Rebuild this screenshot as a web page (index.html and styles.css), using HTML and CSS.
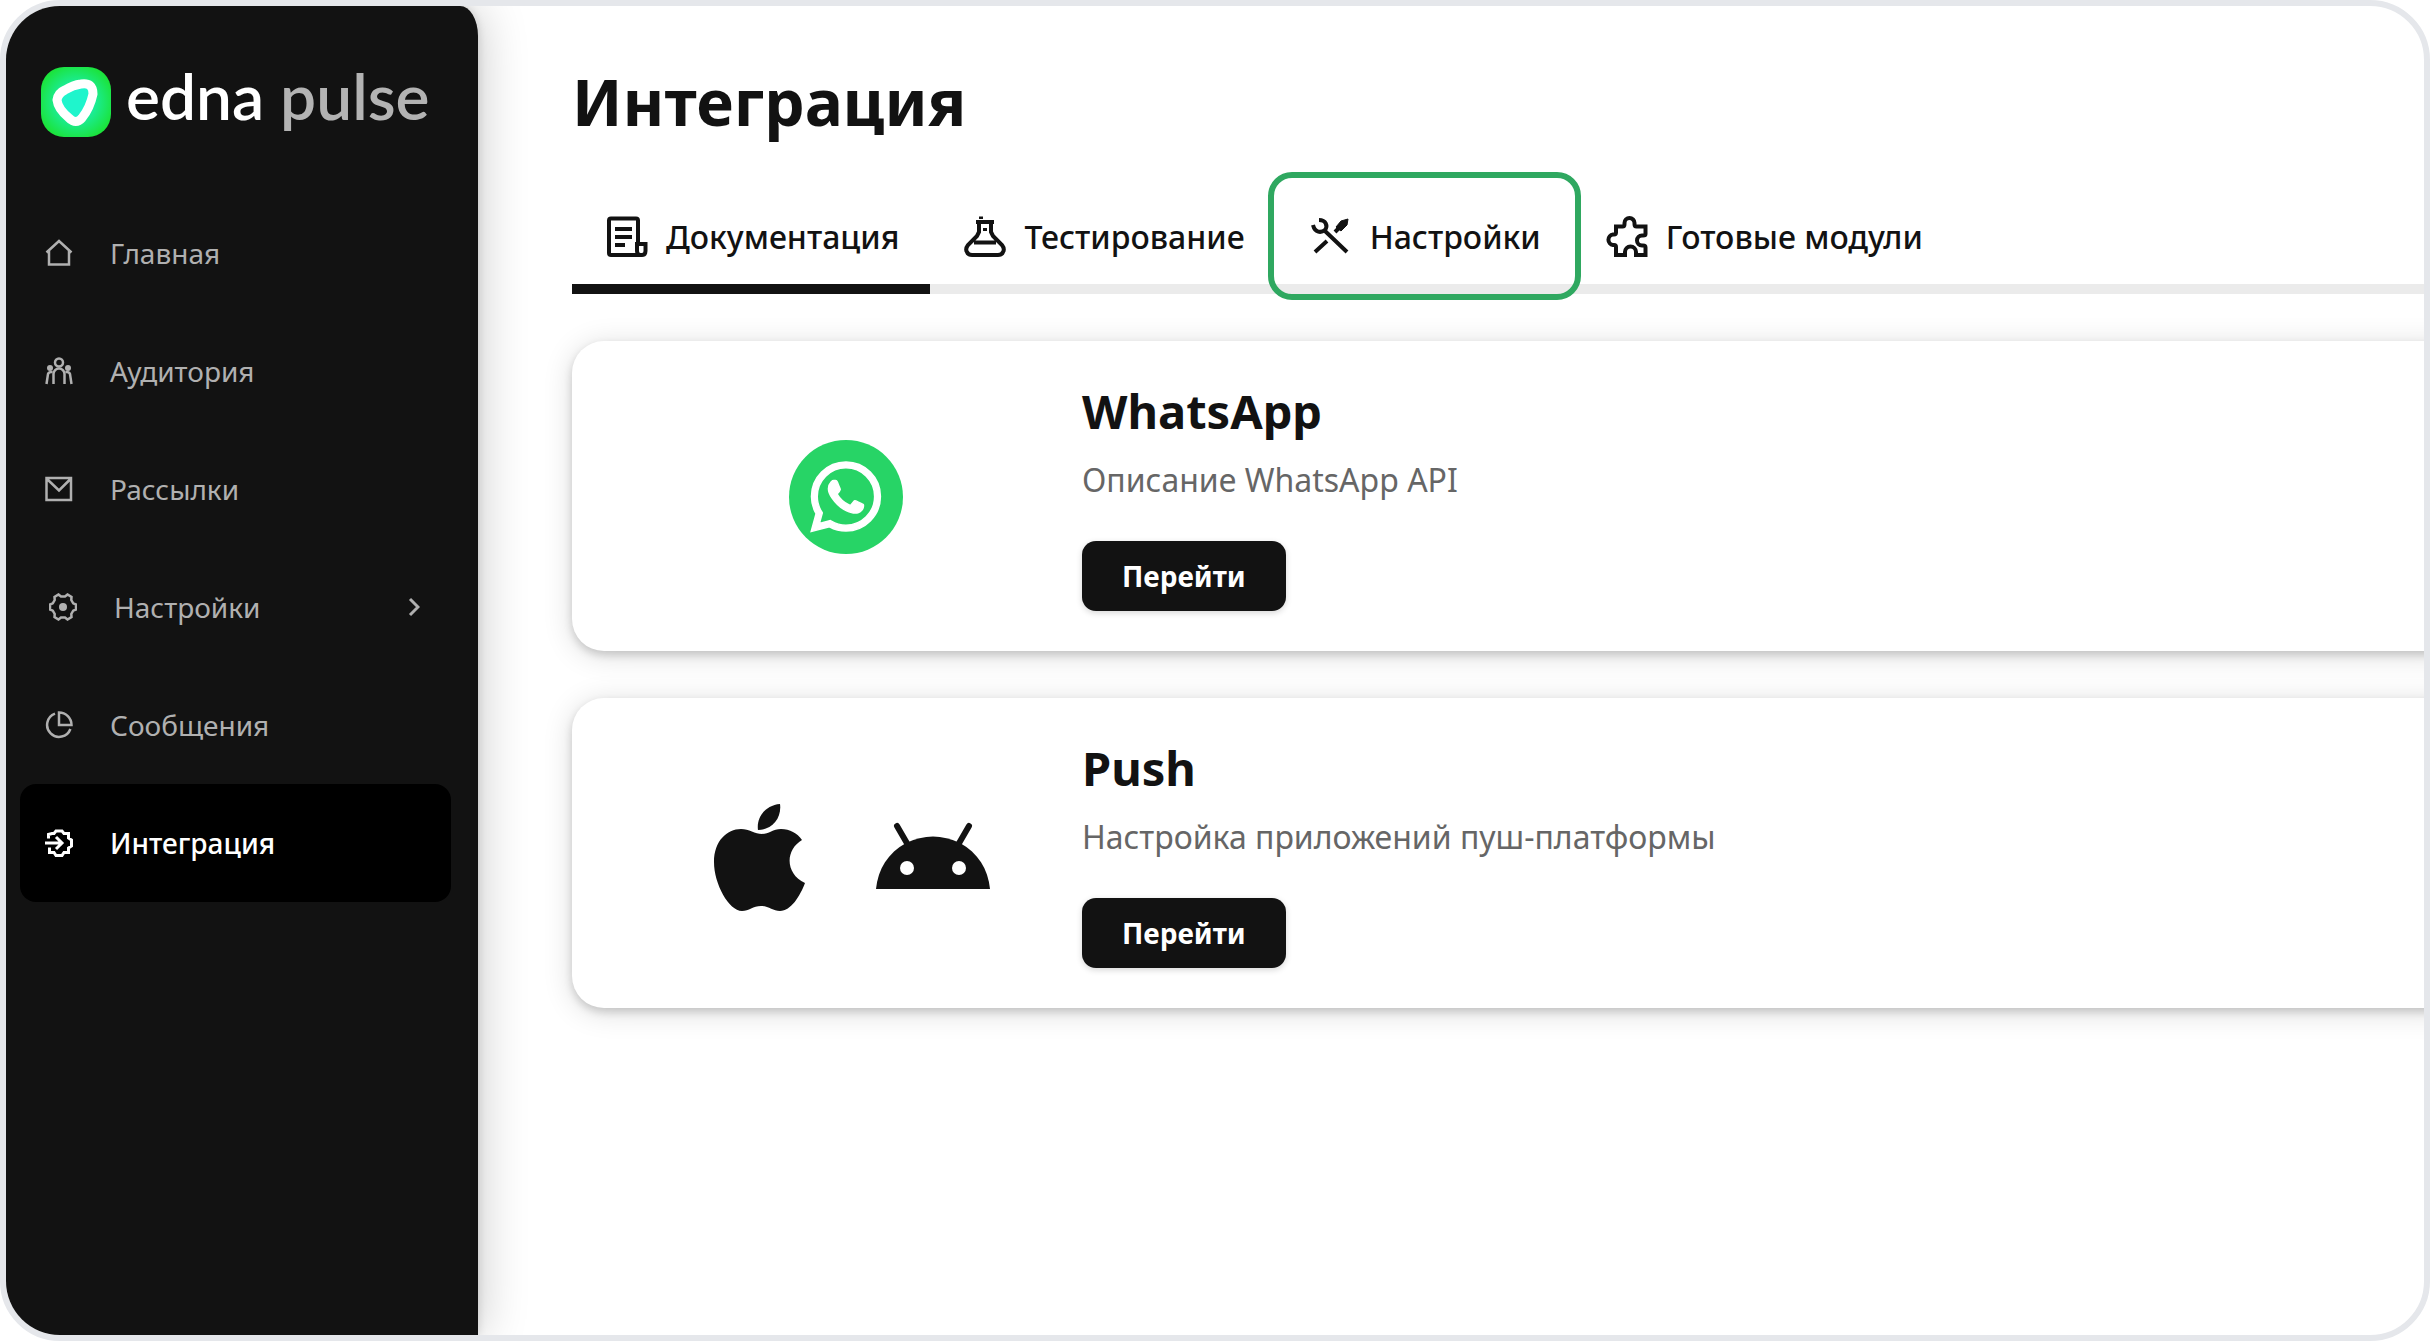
FILE: index.html
```html
<!DOCTYPE html>
<html lang="ru">
<head>
<meta charset="utf-8">
<meta name="viewport" content="width=device-width, initial-scale=1">
<title>edna pulse — Интеграция</title>
<link rel="stylesheet" href="styles.css">
</head>
<body>
<div class="app">
  <aside class="sidebar">
    <a class="logo" href="#">
      <svg class="logo-mark" viewBox="0 0 70 70" aria-hidden="true">
        <defs>
          <radialGradient id="glow" cx="50%" cy="50%" r="62%">
            <stop offset="0" stop-color="#1cf2d0"/>
            <stop offset="0.45" stop-color="#1bec94"/>
            <stop offset="0.9" stop-color="#1be33a"/>
          </radialGradient>
        </defs>
        <rect width="70" height="70" rx="23" fill="url(#glow)"/>
        <path d="M40 17Q52 15 52 27Q49 41 41 51Q35 58 28 51Q17 42 16 33Q17 26 24 23Q32 18 40 17Z" fill="#1ff5cc" stroke="#fff" stroke-width="9" stroke-linejoin="round"/>
      </svg>
      <span class="logo-text">edna <span class="logo-product">pulse</span></span>
    </a>
    <nav class="menu" aria-label="Главное меню">
      <a class="menu-item" href="#">
        <svg class="menu-icon" viewBox="0 0 28 28" aria-hidden="true"><path d="M1.500 13.500L14 2L26.500 13.500M4 11.500V25.500H24V11.500"/></svg>
        <span>Главная</span>
      </a>
      <a class="menu-item" href="#">
        <svg class="menu-icon" viewBox="0 0 28 28" aria-hidden="true"><circle cx="14" cy="5.500" r="4"/><path d="M8.500 27V17a5.500 5.500 0 0 1 11 0V27M1.500 27L3 17Q4 14.500 7.500 15M26.500 27L25 17Q24 14.500 20.500 15"/><circle class="solid" cx="5" cy="11" r="3"/><circle class="solid" cx="23" cy="11" r="3"/></svg>
        <span>Аудитория</span>
      </a>
      <a class="menu-item" href="#">
        <svg class="menu-icon" viewBox="0 0 28 28" aria-hidden="true"><path d="M1.500 3H26V25H1.500ZM2 4L14 15.500L25.500 4"/></svg>
        <span>Рассылки</span>
      </a>
      <a class="menu-item menu-item-nested" href="#">
        <svg class="menu-icon" viewBox="0 0 28 28" aria-hidden="true"><path d="M9.500 1.500L12 3.500H16L18.500 1.500L22.500 4L22.300 7L24.200 10.300L27 11.500V16.500L24.200 17.700L22.300 21L22.500 24L18.500 26.500L16 24.500H12L9.500 26.500L5.500 24L5.700 21L3.800 17.700L1 16.500V11.500L3.800 10.300L5.700 7L5.500 4Z"/><circle class="solid" cx="14" cy="14" r="4"/></svg>
        <span>Настройки</span>
        <svg class="menu-arrow" viewBox="0 0 12 20" aria-hidden="true"><path d="M2 2L10 10L2 18"/></svg>
      </a>
      <a class="menu-item" href="#">
        <svg class="menu-icon" viewBox="0 0 28 28" aria-hidden="true"><path d="M10 2.600A12 12 0 1 0 25.400 18M14 1.500V14H26.500A12.500 12.500 0 0 0 14 1.500Z"/></svg>
        <span>Сообщения</span>
      </a>
      <a class="menu-item menu-item-active" href="#" aria-current="page">
        <svg class="menu-icon" viewBox="0 0 28 28" aria-hidden="true"><path d="M3.500 9.500V5.500L7 4.500L9 4.500L11 2H17L19 4.500L23.500 4.500V9L26.500 11V17L23.500 19V23.500H19L17 26.500H11L9 23.500H4.500V18.500M0 14H16M11 8L17 14L11 20"/></svg>
        <span>Интеграция</span>
      </a>
    </nav>
  </aside>

  <main class="content">
    <h1 class="title">Интеграция</h1>
    <div class="tabs" role="tablist">
      <button class="tab tab-active" type="button" role="tab" aria-selected="true">
        <svg class="tab-icon" viewBox="0 0 42 42" aria-hidden="true"><path d="M32 27V4.500Q32 2.500 30 2.500H5Q3 2.500 3 4.500V37Q3 39 5 39H36Q39.500 39 39.500 35V28H31V35Q31 39 34.500 39M9 13H26M9 21H26M9 29H19"/></svg>
        <span>Документация</span>
      </button>
      <button class="tab" type="button" role="tab" aria-selected="false">
        <svg class="tab-icon" viewBox="0 0 42 42" aria-hidden="true"><path d="M12 6H30M15 7V16L13 20L4 29Q1 33 3 36Q4 39 8 39H34Q38 39 39 36Q41 33 38 29L29 20L27 16V7M10 26.500H32M21 12V15M17 0.500V3"/></svg>
        <span>Тестирование</span>
      </button>
      <button class="tab tab-highlighted" type="button" role="tab" aria-selected="false">
        <svg class="tab-icon" viewBox="0 0 42 42" aria-hidden="true"><path d="M15 15L37 36M5 36L17 25M25 16L30 11"/><path d="M3 9C5 17 11 17 15 14C18 10 16 4 9 4"/><path class="solid" d="M26 11L31 5L38 3L37 9L31 15Z"/></svg>
        <span>Настройки</span>
      </button>
      <button class="tab" type="button" role="tab" aria-selected="false">
        <svg class="tab-icon" viewBox="0 0 42 42" aria-hidden="true"><path d="M10 10.500H16.500Q18.500 10.500 18.500 8V7a5 5 0 0 1 10 0V8Q28.500 10.500 30.500 10.500H39.500V18Q39.500 19.500 37 19.500H36a5 5 0 0 0 0 10H37Q39.500 29.500 39.500 31.500V39H30V36a5.500 5.500 0 0 0 -11 0V39H10V31Q10 29 8 29H7a5.300 5.300 0 0 1 0 -10.500H8Q10 18.500 10 16.500Z"/></svg>
        <span>Готовые модули</span>
      </button>
    </div>

    <section class="cards">
      <article class="card">
        <div class="card-icons">
          <svg class="card-icon" viewBox="0 0 114 114" role="img" aria-label="WhatsApp">
            <circle cx="57" cy="57" r="57" fill="#27d466"/>
            <g transform="translate(22 22) scale(2.900)" fill="#fff" stroke="#fff" stroke-width="0.500"><path d="M17.472 14.382c-.297-.149-1.758-.867-2.030-.967-.273-.099-.471-.148-.670.150-.197.297-.767.966-.940 1.164-.173.199-.347.223-.644.075-.297-.150-1.255-.463-2.390-1.475-.883-.788-1.480-1.761-1.653-2.059-.173-.297-.018-.458.130-.606.134-.133.298-.347.446-.520.149-.174.198-.298.298-.497.099-.198.050-.371-.025-.520-.075-.149-.669-1.612-.916-2.207-.242-.579-.487-.500-.669-.510-.173-.008-.371-.010-.570-.010-.198 0-.520.074-.792.372-.272.297-1.040 1.016-1.040 2.479 0 1.462 1.065 2.875 1.213 3.074.149.198 2.096 3.200 5.077 4.487.709.306 1.262.489 1.694.625.712.227 1.360.195 1.871.118.571-.085 1.758-.719 2.006-1.413.248-.694.248-1.289.173-1.413-.074-.124-.272-.198-.570-.347m-5.421 7.403h-.004a9.870 9.870 0 0 1-5.031-1.378l-.361-.214-3.741.982.998-3.648-.235-.374a9.860 9.860 0 0 1-1.510-5.260c.001-5.450 4.436-9.884 9.888-9.884 2.640 0 5.122 1.030 6.988 2.898a9.825 9.825 0 0 1 2.893 6.994c-.003 5.450-4.437 9.884-9.885 9.884m8.413-18.297A11.815 11.815 0 0 0 12.050 0C5.495 0 .160 5.335.157 11.892c0 2.096.547 4.142 1.588 5.945L.057 24l6.305-1.654a11.882 11.882 0 0 0 5.683 1.448h.005c6.554 0 11.890-5.335 11.893-11.893a11.821 11.821 0 0 0-3.480-8.413z"/></g>
          </svg>
        </div>
        <div class="card-body">
          <h2 class="card-title">WhatsApp</h2>
          <p class="card-text">Описание WhatsApp API</p>
          <button class="card-button" type="button">Перейти</button>
        </div>
      </article>

      <article class="card">
        <div class="card-icons">
          <svg class="card-icon" viewBox="0 0 114 114" role="img" aria-label="Apple">
            <g transform="translate(11 7)" fill="#121212"><path d="M66 0C68 14 58 26 44 26C42 13 52 1 66 0Z"/><path d="M48 30C55 30 59 25 67 25C76 25 83 29 88 36C71 46 71 70 91 79C86 92 77 107 66 107C59 107 55 102 47 102C39 102 35 107 28 107C15 107 0 80 0 58C0 37 13 25 27 25C35 25 41 30 48 30Z"/></g>
          </svg>
          <svg class="card-icon" viewBox="0 0 114 114" role="img" aria-label="Android">
            <g transform="translate(0 26)"><path d="M0 66C2 46 12 30 30 20Q57 7 84 20C102 30 112 46 114 66Z" fill="#121212"/><path d="M21 3L32 22M93 3L82 22" stroke="#121212" stroke-width="6" stroke-linecap="round"/><circle cx="31" cy="45" r="7" fill="#fff"/><circle cx="83" cy="45" r="7" fill="#fff"/></g>
          </svg>
        </div>
        <div class="card-body">
          <h2 class="card-title">Push</h2>
          <p class="card-text">Настройка приложений пуш-платформы</p>
          <button class="card-button" type="button">Перейти</button>
        </div>
      </article>
    </section>
  </main>
</div>
</body>
</html>
```
FILE: styles.css
```css
* {
  box-sizing: border-box;
}

body {
  margin: 0;
  background: #fff;
  color: #121212;
  font-family: "Noto Sans", "Open Sans", sans-serif;
}

.app {
  display: flex;
  min-height: 100vh;
  border: 6px solid #e5e7eb;
  border-radius: 60px;
  overflow: hidden;
}

/* Sidebar */
.sidebar {
  flex: 0 0 472px;
  padding: 61px 27px 40px 14px;
  background: #121212;
  border-radius: 0 18px 0 0 / 0 30px 0 0;
  box-shadow: 0 0 10px rgba(0, 0, 0, 0.14), 4px 0 48px rgba(0, 0, 0, 0.2);
}

.logo {
  display: flex;
  align-items: center;
  gap: 15px;
  height: 70px;
  padding-left: 21px;
  text-decoration: none;
}

.logo-mark {
  flex: none;
  width: 70px;
  height: 70px;
}

.logo-text {
  padding-bottom: 12px;
  color: #fff;
  font: 600 64px/70px Lato, sans-serif;
  white-space: nowrap;
}

.logo-product {
  color: #b3b3b3;
}

.menu {
  display: flex;
  flex-direction: column;
  margin-top: 57px;
}

.menu-item {
  display: flex;
  align-items: center;
  gap: 37px;
  height: 118px;
  padding: 0 31px 0 25px;
  border-radius: 16px;
  color: #b0b0b0;
  font-size: 28px;
  line-height: 38px;
  text-decoration: none;
}

.menu-item-nested {
  padding-left: 29px;
}

.menu-item-active {
  background: #000;
  color: #fff;
  font-weight: 500;
}

.menu-icon,
.menu-arrow {
  flex: none;
  fill: none;
  stroke: currentColor;
  stroke-width: 2.5;
}

.menu-icon {
  width: 28px;
  height: 28px;
}

.menu-item-active .menu-icon {
  stroke-width: 3;
}

.menu-arrow {
  width: 12px;
  height: 20px;
  margin-left: auto;
  stroke-width: 3;
}

.solid {
  fill: currentColor;
}

.menu-icon .solid {
  stroke: none;
}

/* Content */
.content {
  flex: 1;
  min-width: 0;
  padding: 56px 0 60px 94px;
}

.title {
  margin: 0;
  font-size: 64px;
  font-weight: 700;
  line-height: 80px;
}

.tabs {
  display: flex;
  margin-top: 48px;
  background: linear-gradient(#ebebeb, #ebebeb) bottom / 100% 10px no-repeat;
}

.tab {
  position: relative;
  display: flex;
  align-items: center;
  gap: 18px;
  height: 104px;
  padding: 0 31px 0 34px;
  border: 0;
  border-bottom: 10px solid transparent;
  background: none;
  color: #121212;
  font: 500 32px/44px "Noto Sans", "Open Sans", sans-serif;
  white-space: nowrap;
}

.tab-active {
  border-bottom-color: #121212;
}

.tab-highlighted::after {
  position: absolute;
  inset: -18px -9px -16px -8px;
  border: 6px solid #2fa860;
  border-radius: 24px;
  content: "";
}

.tab-icon {
  width: 42px;
  height: 42px;
  fill: none;
  stroke: currentColor;
  stroke-width: 4;
}

.tab-icon .solid {
  fill: currentColor;
  stroke-width: 1;
}

/* Cards run past the right edge of the window */
.cards {
  display: flex;
  flex-direction: column;
  gap: 47px;
  margin: 47px -48px 0 0;
}

.card {
  display: flex;
  align-items: center;
  padding: 38px 0 40px;
  border-radius: 32px;
  background: #fff;
  box-shadow: 0 4px 8px rgba(0, 0, 0, 0.16), 0 4px 30px rgba(0, 0, 0, 0.14);
}

.card-icons {
  display: flex;
  flex: 0 0 510px;
  justify-content: center;
  gap: 59px;
  padding: 3px 0 0 38px;
}

.card-icon {
  width: 114px;
  height: 114px;
}

.card-title {
  margin: 0;
  font-size: 47px;
  font-weight: 700;
  line-height: 64px;
}

.card-text {
  margin: 15px 0 39px;
  color: #666;
  font-size: 32px;
  line-height: 44px;
}

.card-button {
  height: 70px;
  padding: 0 40px;
  border: 0;
  border-radius: 14px;
  background: #121212;
  box-shadow: 0 2px 6px rgba(0, 0, 0, 0.16);
  color: #fff;
  font: 700 28px/38px "Noto Sans", "Open Sans", sans-serif;
}
```
